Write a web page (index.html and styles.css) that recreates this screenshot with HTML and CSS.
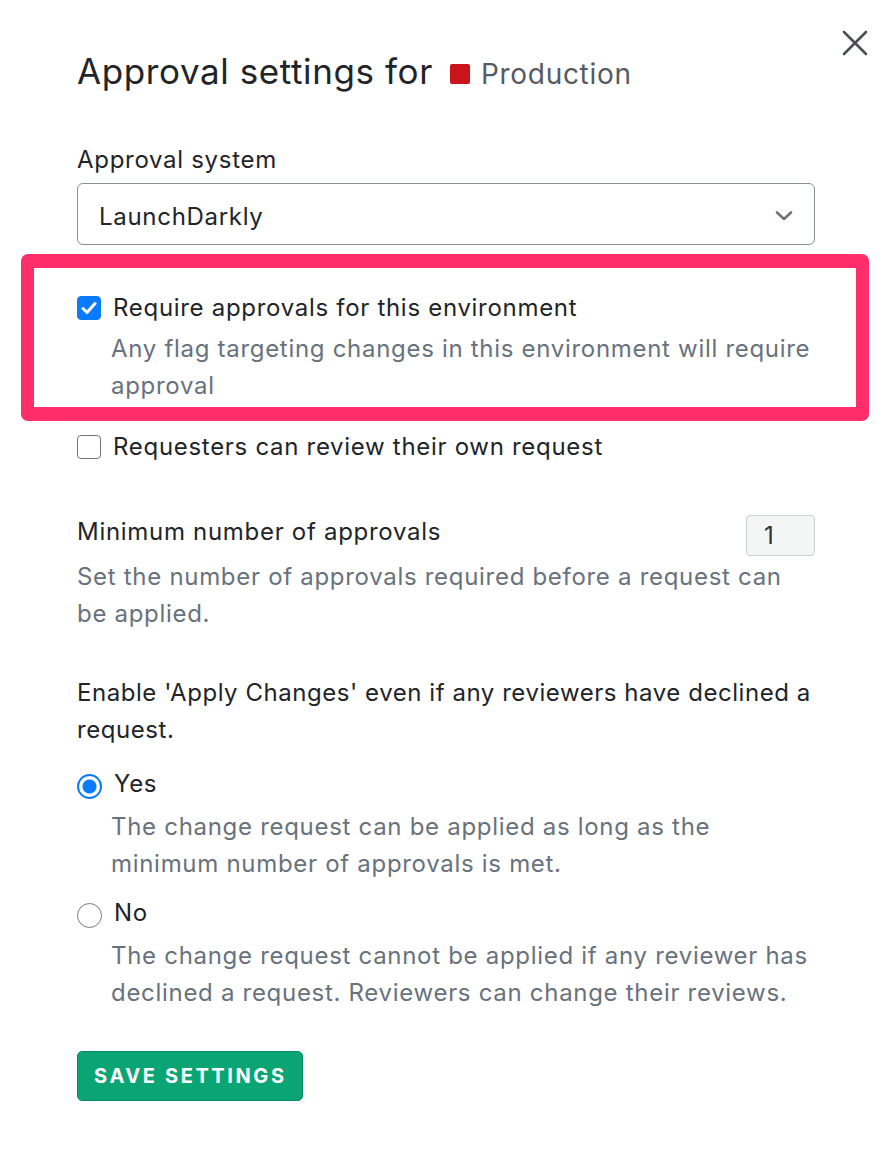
FILE: index.html
```html
<!DOCTYPE html>
<html lang="en">
<head>
<meta charset="utf-8">
<title>Approval settings</title>
<link rel="stylesheet" href="styles.css">
</head>
<body>
<div class="modal">
  <div class="header">
    <h2 class="title">Approval settings for <span class="env"><span class="swatch"></span>Production</span></h2>
    <button class="close" aria-label="Close">
      <svg width="26" height="26" viewBox="0 0 26 26"><path d="M2 2 L24 24 M24 2 L2 24" stroke="#4a4f55" stroke-width="2.6" stroke-linecap="round" fill="none"/></svg>
    </button>
  </div>

  <div class="content">
    <div class="field">
      <div class="label">Approval system</div>
      <div class="select">
        <span>LaunchDarkly</span>
        <svg width="18" height="12" viewBox="0 0 18 12"><path d="M2 2.5 L9 9 L16 2.5" stroke="#6b7580" stroke-width="2.6" stroke-linecap="round" stroke-linejoin="round" fill="none"/></svg>
      </div>
    </div>

    <div class="highlight">
      <div class="option">
        <span class="checkbox checked">
          <svg width="16" height="14" viewBox="0 0 16 14"><path d="M2 7.5 L6 11.5 L14 2.5" stroke="#fff" stroke-width="3" stroke-linecap="round" stroke-linejoin="round" fill="none"/></svg>
        </span>
        <span class="option-label">Require approvals for this environment</span>
      </div>
      <p class="hint indent">Any flag targeting changes in this environment will require approval</p>
    </div>

    <div class="option second">
      <span class="checkbox"></span>
      <span class="option-label">Requesters can review their own request</span>
    </div>

    <div class="min-row">
      <span class="text">Minimum number of approvals</span>
      <span class="num-input">1</span>
    </div>
    <p class="hint min-hint">Set the number of approvals required before a request can be applied.</p>

    <p class="text question">Enable 'Apply Changes' even if any reviewers have declined a request.</p>

    <div class="option radio-row">
      <span class="radio checked"></span>
      <span class="option-label">Yes</span>
    </div>
    <p class="hint indent radio-hint">The change request can be applied as long as the minimum number of approvals is met.</p>

    <div class="option radio-row no">
      <span class="radio"></span>
      <span class="option-label">No</span>
    </div>
    <p class="hint indent radio-hint">The change request cannot be applied if any reviewer has declined a request. Reviewers can change their reviews.</p>

    <button class="save">SAVE SETTINGS</button>
  </div>
</div>
</body>
</html>
```

FILE: styles.css
```css
* { box-sizing: border-box; }

html, body {
  margin: 0;
  padding: 0;
  background: #ffffff;
}

body {
  font-family: Inter, "Noto Sans", "Liberation Sans", sans-serif;
  font-size: 24px;
  line-height: 37px;
  letter-spacing: 0.7px;
  color: #212529;
}

.modal {
  width: 894px;
  padding: 28px 26px 40px 77px;
}

.header {
  display: flex;
  justify-content: space-between;
  align-items: flex-start;
}

.title {
  margin: 23px 0 0 0;
  font-size: 35px;
  line-height: 40px;
  font-weight: 400;
  letter-spacing: 0.6px;
  color: #212529;
  display: flex;
  align-items: baseline;
}

.env {
  display: inline-flex;
  align-items: center;
  margin-left: 17px;
  font-size: 28px;
  letter-spacing: 0.7px;
  color: #545b64;
}

.swatch {
  display: inline-block;
  width: 20px;
  height: 20px;
  background: #c8141a;
  border-radius: 2px;
  margin-right: 11px;
}

.close {
  border: 0;
  background: transparent;
  padding: 0;
  margin: 2px 0 0 0;
  width: 26px;
  height: 26px;
  cursor: pointer;
}

.content {
  width: 738px;
}

.field {
  margin-top: 47px;
}

.label {
  margin-bottom: 5px;
}

.select {
  height: 62px;
  border: 1.5px solid #878f98;
  border-radius: 6px;
  display: flex;
  align-items: center;
  justify-content: space-between;
  padding: 4px 21px 0 21px;
}

.highlight {
  position: relative;
  margin-top: 44px;
}

.highlight::before {
  content: "";
  position: absolute;
  top: -35px;
  left: -56px;
  right: -54px;
  bottom: -17px;
  border: 13px solid #ff2e6b;
  border-top-width: 14px;
  border-bottom-width: 14px;
  border-radius: 7px;
  pointer-events: none;
}

.option {
  display: flex;
  align-items: center;
  gap: 12px;
}

.option.second {
  margin-top: 24px;
}

.checkbox {
  width: 24px;
  height: 24px;
  border: 1.5px solid #757575;
  border-radius: 4px;
  background: #fff;
  display: inline-flex;
  align-items: center;
  justify-content: center;
  flex: none;
}

.checkbox.checked {
  background: #0a7bff;
  border-color: #0a7bff;
}

.hint {
  margin: 0;
  color: #68727d;
}

.indent {
  padding-left: 34px;
}

.highlight .hint {
  margin-top: 4px;
}

.min-row {
  margin-top: 48px;
  display: flex;
  justify-content: space-between;
  align-items: flex-start;
}

.num-input {
  margin-top: 2px;
  width: 69px;
  height: 41px;
  border: 1px solid #cfd2d5;
  border-radius: 4px;
  background: #f4f5f5;
  font-size: 24px;
  line-height: 39px;
  padding-left: 17px;
  color: #333;
}

.min-hint {
  margin-top: 2px;
}

.question {
  margin: 42px 0 0 0;
  letter-spacing: 0.55px;
}

.radio-row {
  margin-top: 17px;
}

.radio-row.no {
  margin-top: 12px;
}

.radio {
  width: 25px;
  height: 25px;
  border-radius: 50%;
  border: 1.5px solid #7a7a7a;
  background: #fff;
  flex: none;
  margin-top: 6px;
}

.radio.checked {
  border: 2px solid #0a7bff;
  background: radial-gradient(circle, #0a7bff 0 6.5px, #fff 7.5px);
}

.radio-hint {
  margin-top: 6px;
}

.save {
  margin-top: 40px;
  height: 50px;
  padding: 0 15px 0 16px;
  background: #0ba574;
  border: 1.5px solid #078a5f;
  border-radius: 5px;
  color: #ffffff;
  font-family: Inter, "Noto Sans", "Liberation Sans", sans-serif;
  font-size: 20px;
  font-weight: 700;
  letter-spacing: 2.6px;
  cursor: pointer;
}
```
